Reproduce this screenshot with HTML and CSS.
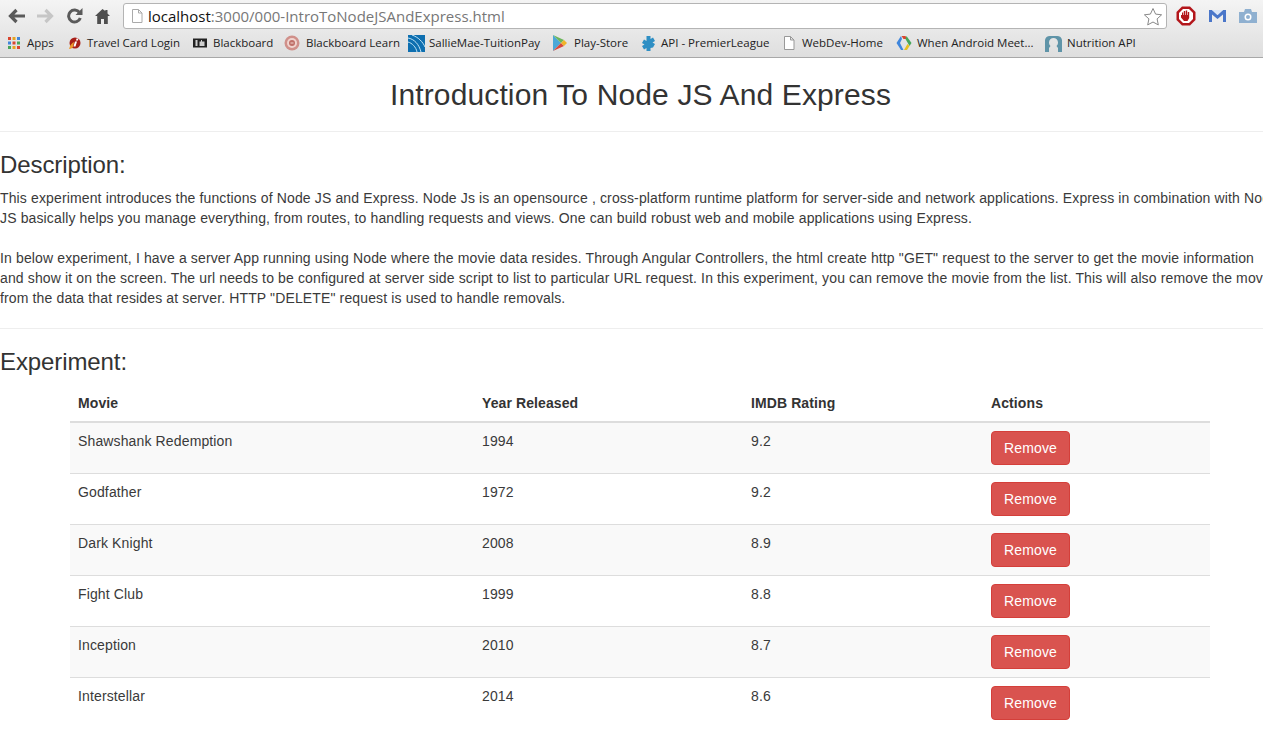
FILE: index.html
```html
<!DOCTYPE html>
<html lang="en">

<head>
    <meta charset="UTF-8" />
    <title>Introduction To Node JS And Express</title>
    <link rel="stylesheet" href="styles.css">
</head>

<body>
    <div class="browser">
        <div class="toolbar">
            <svg class="nav-icon" width="17" height="16" viewBox="0 0 17 16"><path d="M8.500 2 2.500 8l6 6M3 8h14" fill="none" stroke="#5a5a5a" stroke-width="3.200"/></svg>
            <svg class="nav-icon" width="17" height="16" viewBox="0 0 17 16"><path d="M8.500 2l6 6-6 6M14 8H0" fill="none" stroke="#c6c6c6" stroke-width="3.200"/></svg>
            <svg class="nav-icon" width="17" height="16" viewBox="0 0 17 16"><path d="M13.500 4.500a6 6 0 1 0 .8 5.500" fill="none" stroke="#5a5a5a" stroke-width="3"/><path d="M9.500 7h7V0z" fill="#5a5a5a"/></svg>
            <svg class="nav-icon" width="15" height="16" viewBox="0 0 15 16"><path d="M7.500 1 0 8h2.200v8h3.800v-5h3v5h3.800V8H15l-2.500-2.400V2h-2.200v1z" fill="#4f4f4f"/></svg>
            <div class="address">
                <svg width="12" height="14" viewBox="0 0 12 14"><path d="M1.500.5h6l3.500 3.500v9.500h-9.500zM7.500.5V4H11" fill="#fff" stroke="#aaa"/></svg>
                <span class="url"><span class="host">localhost</span>:3000/000-IntroToNodeJSAndExpress.html</span>
                <svg class="star" width="20" height="19" viewBox="0 0 20 19"><path d="M10 1.500l2.600 5.600 6 .7-4.500 4.100 1.200 6L10 15l-5.300 2.900 1.200-6L1.400 7.800l6-.7z" fill="#fff" stroke="#888"/></svg>
            </div>
            <svg class="ext-icon ext-stop" width="20" height="20" viewBox="0 0 20 20"><path d="M6 .5h8L19.500 6v8L14 19.500H6L.5 14V6z" fill="#b3161b"/><path d="M3 7l4-4h6l4 4v6l-4 4H7l-4-4z" fill="#fff"/><path d="M6 9V6.500h1.200V9h.6V5h1.400v4h.6V4.500h1.400V9h.6V6h1.400v6l-1.700 3H8l-3-3.500V9z" fill="#b3161b"/></svg>
            <svg class="ext-icon" width="17" height="14" viewBox="0 0 17 14"><path d="M0 1h3l5.500 5L14 1h3v12h-3V5.500L8.500 10 3 5.500V13H0z" fill="#4a76c9"/><path d="M3 1h11L8.500 6z" fill="#dbe6f7"/></svg>
            <svg class="ext-icon" width="18" height="14" viewBox="0 0 18 14"><path d="M0 3h5l1-3h6l1 3h5v11H0z" fill="#8fb0d0"/><circle cx="9" cy="8" r="3.500" fill="#fff"/><circle cx="9" cy="8" r="2" fill="#8fb0d0"/></svg>
        </div>
        <div class="bookmarks">
            <a class="mark mark-apps">
                <svg width="14" height="14" viewBox="0 0 14 14"><path d="M1 1h3v3H1z" fill="#d9452f"/><path d="M5.500 1h3v3h-3z" fill="#e8a420"/><path d="M10 1h3v3h-3z" fill="#3f86dc"/><path d="M1 5.500h3v3H1z" fill="#3f86dc"/><path d="M5.500 5.500h3v3h-3z" fill="#d9452f"/><path d="M10 5.500h3v3h-3z" fill="#46a65a"/><path d="M1 10h3v3H1z" fill="#46a65a"/><path d="M5.500 10h3v3h-3z" fill="#e8a420"/><path d="M10 10h3v3h-3z" fill="#d9452f"/></svg>
                Apps
            </a>
            <a class="mark mark-travel">
                <svg width="14" height="14" viewBox="0 0 14 14"><circle cx="7" cy="7" r="5.500" fill="#a81f18"/><path d="M1 13c1-4 3-6 5-7l-1 5c-1 1-2 2-4 2z" fill="#ee9a2c"/><path d="M7 5.500h2l-1.500 5H5.500zM8.500 2.500h2l-.6 2H8z" fill="#fff"/></svg>
                Travel Card Login
            </a>
            <a class="mark mark-board">
                <svg width="14" height="12" viewBox="0 0 14 12"><path d="M0 1.500h14v9H0z" fill="#222"/><path d="M2.500 3h2v6h-2zM6.500 4.500h1.500V3h1v1.500h2.500V9h-5z" fill="#cfcfcf"/></svg>
                Blackboard
            </a>
            <a class="mark mark-learn">
                <svg width="16" height="16" viewBox="0 0 16 16"><circle cx="8" cy="8" r="7.500" fill="#d0908a"/><circle cx="8" cy="8" r="5" fill="#f0d4cf"/><circle cx="8" cy="8" r="3" fill="#bf6f68"/><path d="M6.500 7.500h3v1h-3z" fill="#f0d4cf"/></svg>
                Blackboard Learn
            </a>
            <a class="mark mark-sallie">
                <svg width="17" height="17" viewBox="0 0 17 17"><path d="M0 0h17v17H0z" fill="#0e6fb0"/><path d="M0 3c6 1 11 6 13 14M0 7c4 1 8 5 9 10M4 0c6 2 11 7 13 12" fill="none" stroke="#bfe3f5"/></svg>
                SallieMae-TuitionPay
            </a>
            <a class="mark mark-play">
                <svg width="14" height="16" viewBox="0 0 14 16"><path d="M0 0v16l8-8z" fill="#4aa8d8"/><path d="M0 0l8 8 3-3z" fill="#6cb65a"/><path d="M0 16l8-8 3 3z" fill="#d8483c"/><path d="M11 5l3 3-3 3-3-3z" fill="#f0b429"/></svg>
                Play-Store
            </a>
            <a class="mark mark-api">
                <svg width="15" height="15" viewBox="0 0 15 15"><path d="M5.500 0h4v3l2.500-1.500 2 3.500-2.500 1.500 2.500 1.500-2 3.500L9.500 12v3h-4v-3L3 13.500 1 10l2.500-1.500L1 7l2-3.500L5.500 5z" fill="#2f8fc4"/></svg>
                API - PremierLeague
            </a>
            <a class="mark mark-web">
                <svg width="12" height="14" viewBox="0 0 12 14"><path d="M1.500.5h6l3.500 3.500v9.500h-9.500zM7.500.5V4H11" fill="#fff" stroke="#999"/></svg>
                WebDev-Home
            </a>
            <a class="mark mark-android">
                <svg width="16" height="16" viewBox="0 0 16 16"><path d="M5 1 .5 8 5 15h2.500L4 8l2-4z" fill="#3f86dc"/><path d="M5.500 1h4l1.500 3H7.500z" fill="#d9452f"/><path d="M10.500 1l5 7-2 3L9.500 4z" fill="#46a65a"/><path d="M13.500 11 11 15H8l3.500-6z" fill="#e8c020"/></svg>
                When Android Meet...
            </a>
            <a class="mark mark-nutrition">
                <svg width="17" height="17" viewBox="0 0 17 17"><path d="M0 5a5 5 0 0 1 5-4h7a5 5 0 0 1 5 4v12h-4V13l-1.500-2c1-1 1.500-2 1.500-3.500a4.500 4.500 0 0 0-9 0c0 1.500.5 2.500 1.500 3.500L4 13v4H0z" fill="#5f94a8"/></svg>
                Nutrition API
            </a>
        </div>
    </div>

    <div class="page">
        <h1 class="title">Introduction To Node JS And Express</h1>
        <hr class="rule">

        <h2 class="heading">Description:</h2>
        <p class="text">This experiment introduces the functions of Node JS and Express. Node Js is an opensource , cross-platform runtime platform for server-side and network applications. Express in combination with Node JS basically helps you manage everything, from routes, to handling requests and views. One can build robust web and mobile applications using Express.</p>
        <p class="text">In below experiment, I have a server App running using Node where the movie data resides. Through Angular Controllers, the html create http "GET" request to the server to get the movie information and show it on the screen. The url needs to be configured at server side script to list to particular URL request. In this experiment, you can remove the movie from the list. This will also remove the movie from the data that resides at server. HTTP "DELETE" request is used to handle removals.</p>
        <hr class="rule">

        <h2 class="heading">Experiment:</h2>
        <div class="table-wrap">
            <table class="movies">
                <thead>
                    <tr>
                        <th class="col-movie">Movie</th>
                        <th class="col-year">Year Released</th>
                        <th class="col-rating">IMDB Rating</th>
                        <th>Actions</th>
                    </tr>
                </thead>
                <tbody>
                    <tr><td>Shawshank Redemption</td><td>1994</td><td>9.2</td><td><button class="remove">Remove</button></td></tr>
                    <tr><td>Godfather</td><td>1972</td><td>9.2</td><td><button class="remove">Remove</button></td></tr>
                    <tr><td>Dark Knight</td><td>2008</td><td>8.9</td><td><button class="remove">Remove</button></td></tr>
                    <tr><td>Fight Club</td><td>1999</td><td>8.8</td><td><button class="remove">Remove</button></td></tr>
                    <tr><td>Inception</td><td>2010</td><td>8.7</td><td><button class="remove">Remove</button></td></tr>
                    <tr><td>Interstellar</td><td>2014</td><td>8.6</td><td><button class="remove">Remove</button></td></tr>
                </tbody>
            </table>
        </div>
    </div>
</body>

</html>
```

FILE: styles.css
```css
* {
    box-sizing: border-box;
}

html,
body {
    height: 100%;
}

body {
    margin: 0;
    overflow: hidden;
    font-family: "Liberation Sans", Arial, sans-serif;
    font-size: 14px;
    line-height: 20px;
    color: #3a3a3a;
    background-color: #fff;
}

/* browser chrome */
.browser {
    height: 58px;
    background-image: linear-gradient(#f4f4f4, #dedede);
    border-bottom: 1px solid #a8a8a8;
}

.toolbar {
    display: flex;
    align-items: center;
    height: 31px;
    padding: 1px 0 0 8px;
}

.nav-icon {
    margin-right: 12px;
    flex: none;
}

.address {
    display: flex;
    align-items: center;
    flex: none;
    width: 1044px;
    height: 26px;
    margin-left: 1px;
    padding: 0 3px 0 7px;
    background-color: #fff;
    border: 1px solid #b4b4b4;
    border-radius: 3px;
}

.url {
    flex: 1;
    margin-left: 5px;
    font-family: "Open Sans", sans-serif;
    font-size: 15px;
    color: #777;
}

.host {
    color: #111;
}

.ext-icon {
    flex: none;
    margin-left: 13px;
}

.ext-stop {
    margin-left: 9px;
}

.bookmarks {
    display: flex;
    align-items: center;
    height: 26px;
    padding: 0 0 2px 7px;
    font-family: "Open Sans", sans-serif;
    font-size: 11.5px;
    color: #222;
    white-space: nowrap;
}

.mark {
    display: flex;
    align-items: center;
    gap: 6px;
}

.mark-apps { width: 61px; }
.mark-travel { width: 125px; gap: 5px; }
.mark-board { width: 91px; }
.mark-learn { width: 124px; }
.mark-sallie { width: 145px; gap: 4px; }
.mark-play { width: 88px; gap: 7px; }
.mark-api { width: 142px; gap: 5px; }
.mark-web { width: 113px; gap: 7px; }
.mark-android { width: 149px; gap: 5px; }
.mark-nutrition { gap: 5px; }

/* page, wider than the window so the right edge is cut off */
.page {
    width: 1281px;
    letter-spacing: 0.135px;
}

.title {
    margin: 0;
    padding-top: 19px;
    font-size: 30px;
    font-weight: 400;
    line-height: 36px;
    text-align: center;
    color: #333;
}

.rule {
    height: 1px;
    margin: 18px 0 0;
    border: 0;
    background-color: #eee;
}

.heading {
    margin: 20px 0 10px;
    font-size: 24px;
    font-weight: 400;
    line-height: 26px;
    letter-spacing: -0.1px;
    color: #333;
}

.text {
    margin: 0 0 20px;
}

.table-wrap {
    padding: 0 71px 0 70px;
}

.movies {
    width: 100%;
    border-collapse: collapse;
}

.movies th {
    padding: 8px;
    text-align: left;
    letter-spacing: 0.1px;
    color: #333;
    border-bottom: 2px solid #ddd;
}

.movies td {
    padding: 8px;
    vertical-align: top;
    border-top: 1px solid #ddd;
}

.movies thead + tbody tr:first-child td {
    border-top: 0;
}

.movies tbody tr:nth-child(odd) {
    background-color: #f9f9f9;
}

.col-movie {
    width: 404px;
}

.col-year {
    width: 269px;
}

.col-rating {
    width: 240px;
}

.remove {
    display: block;
    height: 34px;
    padding: 6px 12px;
    font-family: inherit;
    font-size: 14px;
    line-height: 20px;
    letter-spacing: 0.15px;
    color: #fff;
    background-color: #d9534f;
    border: 1px solid #d43f3a;
    border-radius: 4px;
}
```
